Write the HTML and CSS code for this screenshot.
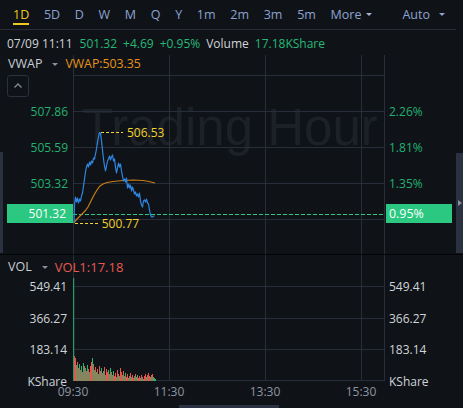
FILE: index.html
```html
<!DOCTYPE html>
<html lang="en">
<head>
<meta charset="utf-8">
<title>Chart</title>
<link rel="stylesheet" href="styles.css">
</head>
<body>
<div class="tabs">
  <span class="tab active">1D</span>
  <span class="tab">5D</span>
  <span class="tab">D</span>
  <span class="tab">W</span>
  <span class="tab">M</span>
  <span class="tab">Q</span>
  <span class="tab">Y</span>
  <span class="tab">1m</span>
  <span class="tab">2m</span>
  <span class="tab">3m</span>
  <span class="tab">5m</span>
  <span class="tab more">More<i class="caret"></i></span>
  <span class="tab auto">Auto<i class="caret"></i></span>
</div>
<div class="info">
  <span class="muted first">07/09 11:11</span>
  <span class="up">501.32</span>
  <span class="up">+4.69</span>
  <span class="up">+0.95%</span>
  <span class="muted">Volume</span>
  <span class="up">17.18KShare</span>
</div>

<div class="pane price">
  <div class="edge"></div>
  <div class="axis axis-left">
    <button class="collapse" type="button"><svg width="20" height="20" viewBox="0 0 20 20"><path d="M6.5 11.5 L10 8 L13.5 11.5" fill="none" stroke="#7f8694" stroke-width="1.4"/></svg></button>
    <div class="ticks ticks-left green">
      <span>507.86</span><span>505.59</span><span>503.32</span>
    </div>
  </div>
  <div class="plot">
    <svg width="312" height="199" viewBox="0 0 312 199">
      <text class="wm" x="9" y="90">Trading Hour</text>
      <g class="grid">
        <path d="M0 20.5H312M0 56.5H312M0 92.5H312M0 128.5H312M0 164.5H312"/>
        <path d="M0.5 0V199M96.5 0V199M192.5 0V199M288.5 0V199M311.5 0V199"/>
      </g>
      <line class="last" x1="0" y1="159.5" x2="312" y2="159.5"/>
      <polyline class="vwap-line" points="0.5,168 4,164 8,160 12,156 15,152 18,146 21,140 24,135 27,131 30,129 34,127.5 40,126.5 50,125.5 60,125 70,125.5 76,126.5 82,128"/>
      <polyline class="price-line" points="1,168 1.5,150 2.5,142 3.5,147 4.5,143 5.5,148 6.5,144 7.5,146 8.5,141 9.5,138 10.5,131 11.5,124 12.5,117 13.5,112 14.5,109 15.5,112 16.5,107 17.5,110 18.5,106 19.5,108 20.5,103 21.5,104 22.5,99 23.5,94 24.5,87 25.5,82 26.5,77.5 27.5,78 28.5,86 29.5,95 30.5,104 31.5,111 32.5,116 33.5,111 34.5,106 35.5,104 36.5,101 37.5,105 38.5,102 39.5,100 40.5,106 41.5,104 42.5,112 43.5,118 44.5,113 45.5,108 46.5,112 47.5,109 48.5,116 49.5,121 50.5,126 51.5,124 52.5,127 53.5,123 54.5,133 55.5,129 56.5,133 57.5,130 58.5,136 59.5,132 60.5,135 61.5,139 62.5,137 63.5,141 64.5,139 65.5,142 66.5,138 67.5,146 68.5,150 69.5,152 70.5,146 71.5,145 72.5,147 73.5,144 74.5,148 75.5,149 76.5,155 77.5,160 78.5,162 79.5,162 80.5,161 81.5,161"/>
      <line class="mark" x1="28" y1="77.5" x2="50" y2="77.5"/>
      <text class="mk" x="54" y="81.8">506.53</text>
      <line class="mark" x1="2" y1="168.5" x2="25" y2="168.5"/>
      <text class="mk" x="28.7" y="172.5">500.77</text>
    </svg>
  </div>
  <div class="axis axis-right">
    <div class="ticks ticks-right green">
      <span>2.26%</span><span>1.81%</span><span>1.35%</span>
    </div>
  </div>
  <div class="edge edge-right"><i class="arrow"></i></div>

  <div class="legend"><span>VWAP</span><i class="caret"></i><span class="vwap">VWAP:503.35</span></div>
  <div class="tag tag-left">501.32</div>
  <div class="tag tag-right">0.95%</div>
</div>

<div class="pane vol">
  <div class="axis axis-vl">
    <div class="vticks vticks-left">
      <span>549.41</span><span>366.27</span><span>183.14</span><span>KShare</span>
    </div>
  </div>
  <div class="plot">
    <svg width="312" height="126" viewBox="0 0 312 126">
      <g class="grid">
        <path d="M0 31.5H312M0 63.5H312M0 94.5H312M0 125.5H312"/>
        <path d="M0.5 0V126M96.5 0V126M192.5 0V126M288.5 0V126M311.5 0V126"/>
      </g>
      <path class="bar-red" d="M1.5 126V101M2.5 126V103M4.5 126V107M5.5 126V113M7.5 126V115M9.5 126V117M11.5 126V111M13.5 126V116M15.5 126V114M17.5 126V111M18.5 126V107M20.5 126V109M22.5 126V112M24.5 126V114M26.5 126V111M27.5 126V116M29.5 126V118M31.5 126V112M33.5 126V114M34.5 126V117M36.5 126V119M38.5 126V117M39.5 126V120M41.5 126V121M42.5 126V118M44.5 126V115M45.5 126V119M47.5 126V113M48.5 126V117M50.5 126V116M51.5 126V121M53.5 126V122M54.5 126V119M56.5 126V121M57.5 126V118M59.5 126V120M60.5 126V123M62.5 126V119M63.5 126V122M65.5 126V123M66.5 126V121M68.5 126V120M69.5 126V122M71.5 126V121M72.5 126V119M74.5 126V120M75.5 126V118M76.5 126V121M78.5 126V120M79.5 126V119"/>
      <path class="bar-green" d="M0.7 126V23M3.5 126V110M6.5 126V109M8.5 126V111M10.5 126V108M12.5 126V113M14.5 126V110M16.5 126V117M19.5 126V103M21.5 126V115M23.5 126V117M25.5 126V119M28.5 126V113M30.5 126V116M32.5 126V120M35.5 126V115M37.5 126V113M40.5 126V116M43.5 126V122M46.5 126V121M49.5 126V120M52.5 126V118M55.5 126V123M58.5 126V122M61.5 126V121M64.5 126V120M67.5 126V123M70.5 126V124M73.5 126V122M77.5 126V122M80.5 126V122M81.5 126V123M82.5 126V124"/>
    </svg>
  </div>
  <div class="axis axis-vr">
    <div class="vticks vticks-right">
      <span>549.41</span><span>366.27</span><span>183.14</span><span>KShare</span>
    </div>
  </div>
  <div class="legend vol-legend"><span>VOL</span><i class="caret"></i><span class="vol1">VOL1:17.18</span></div>
</div>

<div class="times">
  <span>09:30</span><span>11:30</span><span>13:30</span><span>15:30</span>
</div>
<div class="hscroll"><div class="thumb"></div></div>
</body>
</html>
```

FILE: styles.css
```css
* { box-sizing: border-box; }

html, body { margin: 0; padding: 0; }

body {
  width: 463px;
  height: 408px;
  overflow: hidden;
  background: #0f1318;
  color: #d0d3d8;
  font-family: "Open Sans", "Noto Sans", sans-serif;
  font-size: 12px;
}

/* tabs */
.tabs {
  display: flex;
  align-items: flex-start;
  width: 456px;
  height: 30px;
  padding: 0 11px 0 13px;
  gap: 14.7px;
  border-bottom: 1px solid #272c36;
  font-size: 12.5px;
  color: #8da2d0;
  white-space: nowrap;
}
.tab {
  display: flex;
  align-items: center;
  gap: 5px;
  padding-top: 6px;
  line-height: 17px;
  border-bottom: 2px solid transparent;
}
.tab.active {
  color: #f0c81e;
  border-bottom-color: #f0c81e;
}
.tab.more .caret { color: #a9b2c6; }
.tab.auto {
  margin-left: auto;
  gap: 9px;
}
.caret {
  display: inline-block;
  width: 0;
  height: 0;
  border-left: 3px solid transparent;
  border-right: 3px solid transparent;
  border-top: 3px solid currentColor;
}

/* info line */
.info {
  display: flex;
  gap: 6px;
  height: 25px;
  padding: 3px 0 0 7px;
  line-height: 22px;
  white-space: nowrap;
}
.info .first { margin-right: 1px; }
.muted { color: #cfd2d7; }
.up { color: #27b877; }

/* panes */
.pane {
  position: relative;
  display: flex;
}
.price {
  height: 200px;
  border-bottom: 1px solid #030405;
}
.vol { height: 126px; }

.edge {
  flex: none;
  width: 3px;
  height: 101px;
  align-self: flex-end;
  margin-bottom: 1px;
  background: #2a3140;
}
.edge-right {
  width: 7px;
  height: 100px;
  display: flex;
  align-items: center;
  padding-left: 2px;
}
.arrow {
  display: block;
  width: 0;
  height: 0;
  border-top: 3px solid transparent;
  border-bottom: 3px solid transparent;
  border-left: 4px solid #8890a0;
}

.axis { flex: none; }
.axis-left {
  width: 70px;
  display: flex;
  flex-direction: column;
}
.axis-right { width: 71px; }
.axis-vl { width: 73px; }
.axis-vr { width: 78px; }

.collapse {
  width: 22px;
  height: 22px;
  margin: 20px 0 0 4px;
  padding: 0;
  border: 1px solid #2a303c;
  border-radius: 3px;
  background: transparent;
  display: flex;
  align-items: center;
  justify-content: center;
}
.collapse svg { display: block; }

.ticks {
  display: flex;
  flex-direction: column;
  gap: 16px;
  line-height: 20px;
}
.ticks-left {
  margin-top: 4.5px;
  align-items: flex-end;
  padding-right: 5px;
}
.ticks-right {
  padding-top: 46.5px;
  padding-left: 4px;
}
.green { color: #22b070; }

.vticks {
  display: flex;
  flex-direction: column;
  padding-top: 22px;
  line-height: 20px;
  gap: 11.5px;
  color: #d0d3d8;
}
.vticks-left {
  align-items: flex-end;
  padding-right: 6px;
}
.vticks-right { padding-left: 4px; }

.plot {
  flex: none;
  width: 312px;
  overflow: hidden;
}
.plot svg { display: block; }

.grid path {
  fill: none;
  stroke: #282e39;
  stroke-width: 1;
}
.wm {
  font-family: "Liberation Sans", Arial, sans-serif;
  font-size: 51px;
  fill: #1c2027;
}
.last {
  stroke: #2ac880;
  stroke-width: 1;
  stroke-dasharray: 4 2;
}
.vwap-line {
  fill: none;
  stroke: #c97c17;
  stroke-width: 1.2;
}
.price-line {
  fill: none;
  stroke: #2e86e2;
  stroke-width: 1.2;
  stroke-linejoin: round;
}
.mark {
  stroke: #f2d22e;
  stroke-width: 1;
  stroke-dasharray: 3 2;
}
.mk {
  font-family: "Open Sans", sans-serif;
  font-size: 12px;
  fill: #f2d22e;
}
.bar-red {
  fill: none;
  stroke: #e8554d;
  stroke-width: 1;
}
.bar-green {
  fill: none;
  stroke: #22b670;
  stroke-width: 1;
}

/* overlays */
.legend {
  position: absolute;
  top: 0;
  left: 8px;
  display: flex;
  align-items: center;
  gap: 7px;
  line-height: 18px;
  color: #c9ccd2;
  font-size: 12.5px;
}
.legend .caret {
  color: #8a909b;
  margin-left: 3px;
}
.vwap { color: #e69318; font-size: 12.3px; }
.vol-legend { top: 3px; }
.vol1 { color: #e8584f; font-size: 13px; }

.tag {
  position: absolute;
  top: 149px;
  width: 66px;
  height: 19px;
  line-height: 19px;
  background: #2ac880;
  color: #ffffff;
}
.tag-left {
  left: 7px;
  text-align: right;
  padding-right: 7px;
}
.tag-right {
  left: 386px;
  padding-left: 3px;
  font-size: 12.4px;
}

/* time axis */
.times {
  display: flex;
  height: 24px;
  padding-left: 25px;
  line-height: 22px;
  color: #8f96a2;
}
.times span {
  width: 96px;
  text-align: center;
}

.hscroll {
  height: 3px;
  padding-left: 179px;
}
.hscroll .thumb {
  width: 100px;
  height: 3px;
  background: #2b3242;
}
```
